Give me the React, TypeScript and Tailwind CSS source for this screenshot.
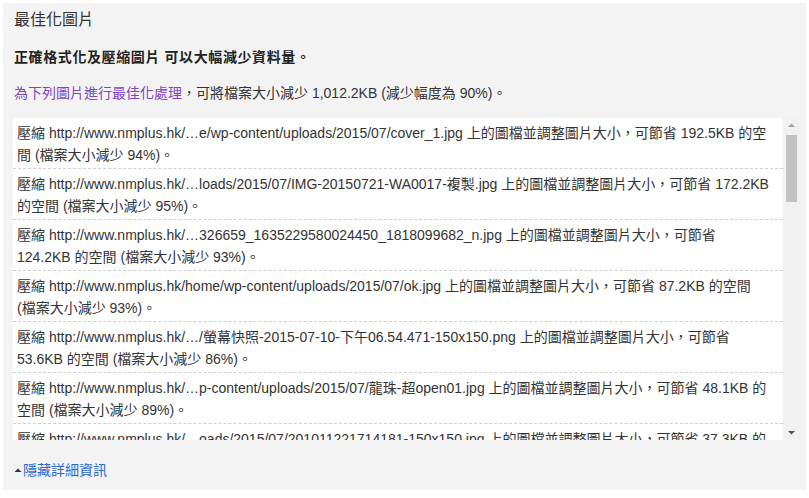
import React from 'react';

const font = { fontFamily: '"Liberation Sans", "Noto Sans CJK TC", sans-serif' };

const items: [string, string][] = [
  ['壓縮 http://www.nmplus.hk/…e/wp-content/uploads/2015/07/cover_1.jpg 上的圖檔並調整圖片大小，可節省 192.5KB 的空', '間 (檔案大小減少 94%)。'],
  ['壓縮 http://www.nmplus.hk/…loads/2015/07/IMG-20150721-WA0017-複製.jpg 上的圖檔並調整圖片大小，可節省 172.2KB', '的空間 (檔案大小減少 95%)。'],
  ['壓縮 http://www.nmplus.hk/…326659_1635229580024450_1818099682_n.jpg 上的圖檔並調整圖片大小，可節省', '124.2KB 的空間 (檔案大小減少 93%)。'],
  ['壓縮 http://www.nmplus.hk/home/wp-content/uploads/2015/07/ok.jpg 上的圖檔並調整圖片大小，可節省 87.2KB 的空間', '(檔案大小減少 93%)。'],
  ['壓縮 http://www.nmplus.hk/…/螢幕快照-2015-07-10-下午06.54.471-150x150.png 上的圖檔並調整圖片大小，可節省', '53.6KB 的空間 (檔案大小減少 86%)。'],
  ['壓縮 http://www.nmplus.hk/…p-content/uploads/2015/07/龍珠-超open01.jpg 上的圖檔並調整圖片大小，可節省 48.1KB 的', '空間 (檔案大小減少 89%)。'],
  ['壓縮 http://www.nmplus.hk/…oads/2015/07/201011221714181-150x150.jpg 上的圖檔並調整圖片大小，可節省 37.3KB 的', '空間 (檔案大小減少 88%)。'],
];

export default function App() {
  return (
    <div className="w-[809px] h-[498px] bg-white p-[3px]" style={font}>
      <div className="h-[487px] bg-[#f3f3f3] pl-[10px] pr-[6px] pt-[6px]">
        {/* heading */}
        <div className="text-[16px] leading-[22px] text-[#333] pl-px">最佳化圖片</div>
        <div className="mt-[15px] text-[14px] leading-[22px] font-bold tracking-[0.6px] text-[#222] pl-px">
          正確格式化及壓縮圖片 可以大幅減少資料量。
        </div>
        <div className="mt-[14px] text-[14px] leading-[22px] text-[#333] pl-px">
          <a className="text-[#7b45c6]">為下列圖片進行最佳化處理</a>，可將檔案大小減少 1,012.2KB (減少幅度為 90%)。
        </div>

        {/* file list */}
        <div className="mt-[14px] flex h-[322px]">
          <div className="flex-1 bg-white overflow-hidden">
            {items.map((it, i) => (
              <div
                key={i}
                className="px-[4px] pt-[4px] pb-[2px] border-b border-dashed border-[#cfcfcf] text-[14px] leading-[22px] text-[#333] whitespace-nowrap"
              >
                <div>{it[0]}</div>
                <div>{it[1]}</div>
              </div>
            ))}
          </div>
          <div className="w-[17px] bg-[#f1f1f1] flex flex-col items-center">
            <svg width="17" height="15" viewBox="0 0 17 15" className="shrink-0">
              <path d="M5 9 L8.5 5.5 L12 9 Z" fill="#a3a3a3" />
            </svg>
            <div className="w-[11px] h-[67px] bg-[#c1c1c1] mt-[2px]" />
            <div className="flex-1" />
            <svg width="17" height="15" viewBox="0 0 17 15" className="shrink-0">
              <path d="M5 6 L8.5 9.5 L12 6 Z" fill="#505050" />
            </svg>
          </div>
        </div>

        {/* toggle */}
        <div className="mt-[19px] flex items-center text-[14px] leading-[22px]">
          <svg width="8" height="8" viewBox="0 0 8 8" className="ml-px shrink-0">
            <path d="M0.5 6 L4 2.5 L7.5 6 Z" fill="#333" />
          </svg>
          <a className="text-[#2a6ad0] ml-[1px]">隱藏詳細資訊</a>
        </div>
      </div>
    </div>
  );
}
